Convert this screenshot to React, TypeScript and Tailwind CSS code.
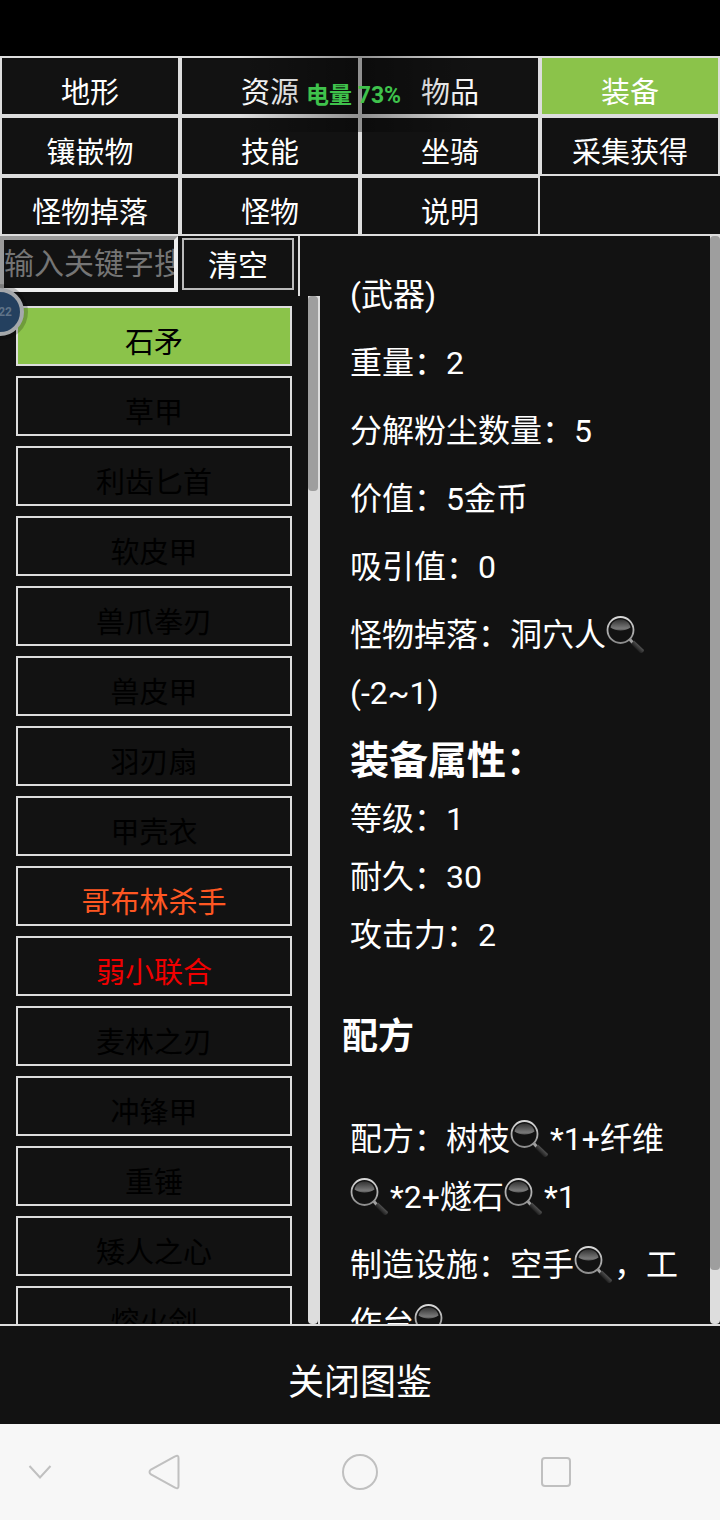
import { useState } from "react";

const tabs = [
  "地形",
  "资源",
  "物品",
  "装备",
  "镶嵌物",
  "技能",
  "坐骑",
  "采集获得",
  "怪物掉落",
  "怪物",
  "说明",
];

const items = [
  { name: "石矛", color: "text-black" },
  { name: "草甲", color: "text-black" },
  { name: "利齿匕首", color: "text-black" },
  { name: "软皮甲", color: "text-black" },
  { name: "兽爪拳刃", color: "text-black" },
  { name: "兽皮甲", color: "text-black" },
  { name: "羽刃扇", color: "text-black" },
  { name: "甲壳衣", color: "text-black" },
  { name: "哥布林杀手", color: "text-[#ff5722]" },
  { name: "弱小联合", color: "text-[#f00000]" },
  { name: "麦林之刃", color: "text-black" },
  { name: "冲锋甲", color: "text-black" },
  { name: "重锤", color: "text-black" },
  { name: "矮人之心", color: "text-black" },
  { name: "熔火剑", color: "text-black" },
];

function Search({ label }: { label: string }) {
  return (
    <button type="button" aria-label={label} className="inline-block w-10 h-10 align-[-7px]">
      <svg viewBox="0 0 40 40" className="w-10 h-10">
        <defs>
          <linearGradient id="rim" x1="0" y1="0" x2="0" y2="1">
            <stop offset="0" stopColor="#d8d8d8" />
            <stop offset="1" stopColor="#8c8c8c" />
          </linearGradient>
          <linearGradient id="glass" x1="0" y1="0" x2="0" y2="1">
            <stop offset="0" stopColor="#333333" />
            <stop offset="0.8" stopColor="#787878" />
            <stop offset="1" stopColor="#5a5a5a" />
          </linearGradient>
          <linearGradient id="handle" x1="0" y1="1" x2="1" y2="0">
            <stop offset="0.25" stopColor="#080808" />
            <stop offset="0.5" stopColor="#3a3a3a" />
            <stop offset="0.75" stopColor="#6a6a6a" />
          </linearGradient>
        </defs>
        <path d="M23.5 26 L27 30" stroke="#a0a0a0" strokeWidth="3" />
        <path d="M28 27.5 L38 37 Q37.5 40.5 34 40 L25 31 Z" fill="url(#handle)" />
        <circle cx="14.5" cy="17" r="13" fill="#121212" stroke="url(#rim)" strokeWidth="1.8" />
        <path
          d="M4.5 14.5 C5.5 9 10 6.500 14.500 6.500 C19 6.500 23.500 9 24.500 14.500 C22 16.500 18 17.500 14.500 17.500 C11 17.500 7 16.500 4.500 14.500 Z"
          fill="url(#glass)"
        />
      </svg>
    </button>
  );
}

function NavBar() {
  return (
    <nav className="h-24 shrink-0 bg-[#f7f7f7] grid grid-cols-[10fr_21fr_28fr_21fr_10fr] items-center">
      <button type="button" aria-label="hide" className="flex justify-center">
        <svg viewBox="0 0 24 24" className="w-6 h-6" fill="none" stroke="#c0c0c0" strokeWidth="2">
          <path d="M1.5 6 L12 17.5 L22.5 6" />
        </svg>
      </button>
      <button type="button" aria-label="back" className="flex justify-center">
        <svg viewBox="0 0 36 40" className="w-9 h-10" fill="none" stroke="#c0c0c0" strokeWidth="2">
          <path d="M29 4.5 Q32.5 2.5 32.5 6 V34 Q32.5 37.5 29 35.5 L5 22.5 Q2 20 5 17.5 Z" />
        </svg>
      </button>
      <button type="button" aria-label="home" className="flex justify-center">
        <svg viewBox="0 0 40 40" className="w-10 h-10" fill="none" stroke="#c0c0c0" strokeWidth="2">
          <circle cx="20" cy="20" r="17" />
        </svg>
      </button>
      <button type="button" aria-label="recents" className="flex justify-center">
        <svg viewBox="0 0 32 32" className="w-8 h-8" fill="none" stroke="#c0c0c0" strokeWidth="2">
          <rect x="2" y="2" width="28" height="28" rx="3" />
        </svg>
      </button>
    </nav>
  );
}

export default function App() {
  const [tab, setTab] = useState("装备");
  const [item, setItem] = useState("石矛");
  const [word, setWord] = useState("");

  return (
    <div className="relative flex flex-col h-screen overflow-hidden bg-[#121212] text-white font-[Roboto,'Noto_Sans_CJK_SC',sans-serif]">
      <div className="h-14 shrink-0 bg-black" />

      <div className="grid grid-cols-4 shrink-0 text-[29px] leading-[44px]">
        {tabs.map((t) => (
          <button
            key={t}
            type="button"
            onClick={() => setTab(t)}
            className={
              t === tab
                ? "h-[60px] pt-[13px] border-2 border-[#ddd] bg-[#8bc34a]"
                : "h-[60px] pt-[13px] border-2 border-[#ddd]"
            }
          >
            {t}
          </button>
        ))}
        <div className="border-b-2 border-[#ddd]" />
      </div>

      <div className="flex flex-1 min-h-0">
        <div className="flex flex-col w-4/9">
          <div className="flex items-start h-[60px] w-[300px] shrink-0 border-r-2 border-[#ddd]">
            <input
              type="text"
              aria-label="输入关键字搜索"
              value={word}
              onChange={(e) => setWord(e.target.value)}
              placeholder="输入关键字搜索"
              className="w-[178px] h-14 pb-0.5 border-4 border-t-[#9a9a9a] border-l-[#9a9a9a] border-b-[#eee] border-r-[#eee] text-[30px] placeholder:text-[#757575] outline-none"
            />
            <button
              type="button"
              onClick={() => setWord("")}
              className="w-28 h-[52px] mt-0.5 ml-1 pt-0.5 border-2 border-[#bbb] text-[30px] leading-[48px]"
            >
              清空
            </button>
          </div>
          <div className="flex flex-1 min-h-0 border-r-2 border-[#ddd]">
            <ul className="flex-1 px-4 overflow-hidden text-[29px] leading-[44px]">
              {items.map((it) => (
                <li key={it.name} className={it.color}>
                  <button
                    type="button"
                    onClick={() => setItem(it.name)}
                    className={
                      it.name === item
                        ? "block w-full h-[60px] mt-2.5 pt-[13px] border-2 border-[#ddd] bg-[#8bc34a]"
                        : "block w-full h-[60px] mt-2.5 pt-[13px] border-2 border-[#ddd]"
                    }
                  >
                    {it.name}
                  </button>
                </li>
              ))}
            </ul>
            <div className="w-2.5 rounded-b bg-[#ddd]">
              <div className="h-[19%] rounded bg-[#9e9e9e]" />
            </div>
          </div>
        </div>

        <div className="flex flex-1 min-w-0">
          <section className="flex-1 overflow-hidden pt-[30px] pl-[22px] pr-4 text-[32px] leading-[58px]">
            <p className="px-2 mb-2.5">(武器)</p>
            <p className="px-2 mb-2.5">重量：2</p>
            <p className="px-2 mb-2.5">分解粉尘数量：5</p>
            <p className="px-2 mb-2.5">价值：5金币</p>
            <p className="px-2 mb-2.5">吸引值：0</p>
            <p className="px-2 mb-2.5">
              怪物掉落：洞穴人
              <Search label="洞穴人" />
              (-2~1)
            </p>
            <h3 className="px-2 text-[39px] font-bold">装备属性：</h3>
            <p className="px-2">等级：1</p>
            <p className="px-2">耐久：30</p>
            <p className="px-2">攻击力：2</p>
            <h2 className="py-11 text-4xl leading-[58px] font-bold">配方</h2>
            <p className="px-2 mb-2.5">
              配方：树枝
              <Search label="树枝" />
              *1+纤维
              <Search label="纤维" />
              *2+燧石
              <Search label="燧石" />
              *1
            </p>
            <p className="px-2">
              制造设施：空手
              <Search label="空手" />
              ，工作台
              <Search label="工作台" />
            </p>
          </section>
          <div className="w-2.5 rounded-b bg-[#ddd]">
            <div className="h-[95%] rounded bg-[#9e9e9e]" />
          </div>
        </div>
      </div>

      <button
        type="button"
        className="h-[100px] shrink-0 pt-4 border-t-2 border-[#ddd] text-4xl"
      >
        关闭图鉴
      </button>

      <NavBar />

      {/* battery toast */}
      <div className="absolute top-14 left-1/2 w-60 h-[76px] -translate-x-1/2 pointer-events-none bg-linear-to-r from-transparent via-black/35 to-transparent" />
      <div className="absolute top-20 left-0 right-0 pl-[306px] pointer-events-none text-[23px] leading-[32px] font-bold text-[#3fc24c]">
        电量 73%
      </div>

      {/* floating ball */}
      <div className="absolute top-72 -left-6 w-12 h-12 rounded-full border-4 border-[#a5a8ab] bg-[#24405f] ring-4 ring-black/20 flex items-center justify-end pr-2 text-xs font-bold text-[#5f7388]">
        22
      </div>
    </div>
  );
}
